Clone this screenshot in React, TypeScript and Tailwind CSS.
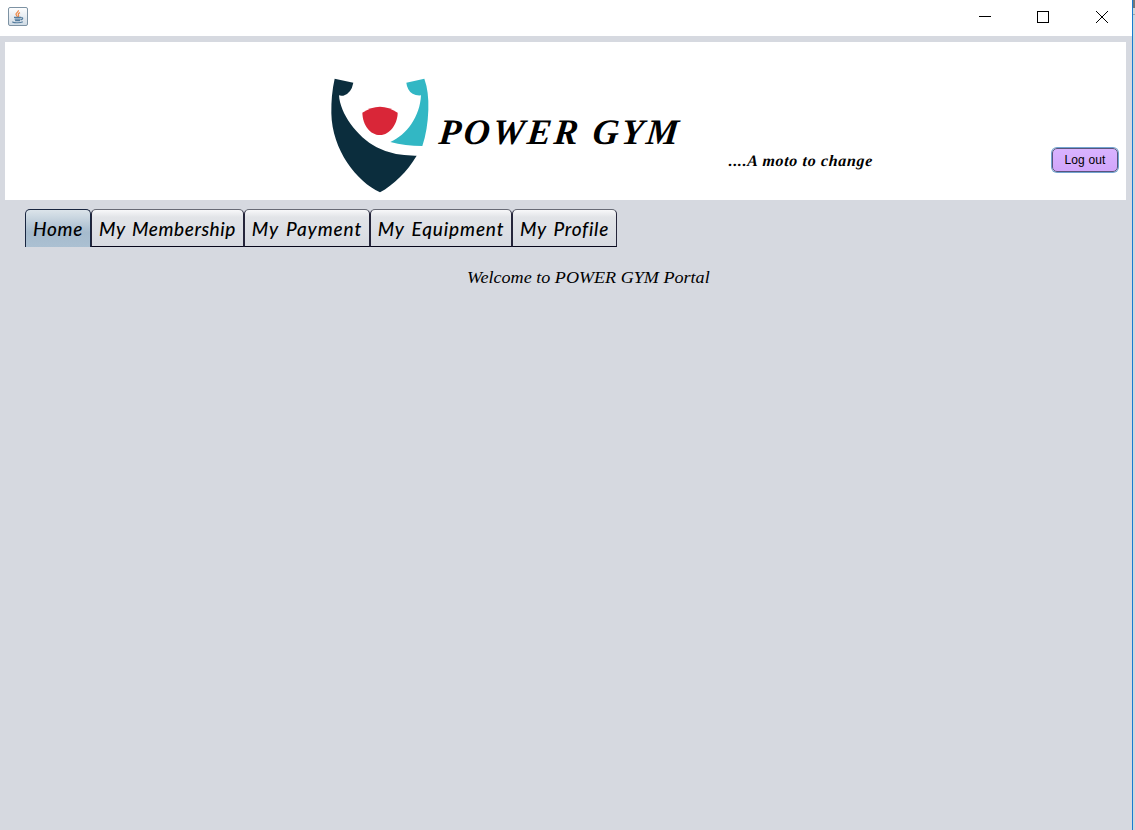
import React from 'react';

const tabs = [
  { label: 'Home', width: 'w-[66px]', text: 'tracking-[0.7px]' },
  { label: 'My Membership', width: 'w-[153px]', text: 'tracking-[0.55px] [word-spacing:2px]' },
  { label: 'My Payment', width: 'w-[126px]', text: 'tracking-[0.9px] [word-spacing:2px]' },
  { label: 'My Equipment', width: 'w-[142px]', text: 'tracking-[0.85px] [word-spacing:2px]' },
  { label: 'My Profile', width: 'w-[105px]', text: 'tracking-[0.7px] [word-spacing:2px]' },
];

function JavaIcon() {
  return (
    <svg className="block h-5 w-5" viewBox="0 0 20 20">
      <defs>
        <linearGradient id="cup" x1="0" y1="0" x2="0" y2="1">
          <stop offset="0" stopColor="#ffffff" />
          <stop offset="1" stopColor="#cfdae4" />
        </linearGradient>
      </defs>
      <rect x="0.5" y="0.5" width="19" height="18" rx="1.5" fill="url(#cup)" stroke="#7d92a3" />
      <path d="M10.3 3.2c.8 1.6-2.4 2.5-2.3 4.1.1 1 1.3 1.5 1.2 2.6M12 5.6c-1.7.7-2.2 1.4-1.5 2.4.5.8.2 1.4-.4 1.9" fill="none" stroke="#ee8642" strokeWidth="1.2" />
      <path d="M6 10.4h7.2M6.6 12.1h6M7.1 13.6h5M13 10.8c2.5-.6 2.2 1.6-.2 2.1M4.6 14.6c-1 1.2 7.6 1.7 10.2.2" fill="none" stroke="#557d9e" strokeWidth="1.1" />
    </svg>
  );
}

function ShieldLogo() {
  return (
    <svg className="mt-7 ml-[315px] h-[130px] w-[120px] shrink-0" viewBox="0 0 360 390">
      <path fill="#0b2d3d" d="M44 26L100 38Q94 70 70 77Q61 78 57 76C60 130 110 200 170 232Q220 258 290 257C262 305 220 345 180 367C110 335 36 240 34 130Q33 75 44 26Z" />
      <path fill="#32b7c4" d="M259 38L313 26Q327 65 325 120Q323 180 307 228Q255 228 211 216C260 195 300 140 303 76Q275 78 265 58Q260 48 259 38Z" />
      <path fill="#d92638" d="M127 128Q180 92 233 128C233 160 210 195 180 195C150 195 128 165 127 128Z" />
    </svg>
  );
}

export default function App() {
  return (
    <div className="flex h-[830px] w-[1135px] overflow-hidden bg-[#d6d9e0] text-black">
      <div className="flex w-[1132px] shrink-0 flex-col">
        <header className="flex h-9 shrink-0 items-start justify-between bg-white pt-[7px] pl-2">
          <JavaIcon />
          <svg className="block h-5 w-[154px]" viewBox="-2 0 154 20" fill="none" stroke="#000" shapeRendering="crispEdges">
            <path d="M-1 9.5H11" />
            <rect x="57.5" y="4.5" width="11" height="11" />
            <path d="M116 4L128 16M128 4L116 16" shapeRendering="auto" />
          </svg>
        </header>

        <section className="mt-1.5 ml-[5px] flex h-[158px] w-[1121px] shrink-0 bg-white">
          <ShieldLogo />
          <h1 className="mt-[69px] -ml-2 w-[296px] shrink-0 origin-bottom-left -skew-x-6 whitespace-nowrap font-['Liberation_Serif',serif] text-[36px] leading-[42px] font-bold italic tracking-[2.8px]">
            POWER GYM
          </h1>
          <p className="mt-[110px] w-[324px] shrink-0 -skew-x-3 whitespace-nowrap font-['Liberation_Serif',serif] text-[16px] leading-[18px] font-bold italic tracking-[0.65px]">
            ....A moto to change
          </p>
          <button className="mt-[106px] h-6 w-[66px] shrink-0 rounded-[5px] border border-[#57557c] bg-linear-to-b from-[#d9b3ff] to-[#d1a5fa] pt-px font-['Liberation_Sans',sans-serif] text-[12px] leading-[21px] tracking-[0.15px] shadow-[0_0_0_1px_#73a4d1]">
            Log out
          </button>
        </section>

        <nav className="mt-[9px] ml-[25px] flex h-[38px] shrink-0">
          {tabs.map((tab, i) => (
            <button
              key={tab.label}
              className={`${tab.width} ${tab.text} h-[38px] shrink-0 whitespace-nowrap rounded-t-[5px] border-x border-t text-center font-['Lato',sans-serif] text-[19px] font-medium italic ${
                i === 0
                  ? 'border-[#192640] bg-linear-to-b from-[#dce4ea] via-[#a6bbcd] via-60% to-[#abc0d2] pt-px'
                  : 'border-b border-x-[#25253a] border-t-[#686b76] border-b-[#07071b] bg-linear-to-b from-[#f8f8fa] via-[#e2e4e8] via-20% to-[#d7dae1] pt-[2px]'
              }`}
            >
              {tab.label}
            </button>
          ))}
        </nav>
        <main className="flex pt-[21px] pl-[467px]">
          <p className="origin-left scale-x-[1.065] whitespace-nowrap font-['Liberation_Serif',serif] text-[17px] leading-[20px] italic">
            Welcome to POWER GYM Portal
          </p>
        </main>
      </div>
      <div className="w-px shrink-0 bg-[#187bd0]" />
      <div className="flex grow flex-col bg-[#d2d5da]">
        <div className="h-2 bg-[#777]" />
        <div className="h-1.5 bg-[#d4d4d4]" />
        <div className="h-px bg-[#a5a5a5]" />
      </div>
    </div>
  );
}
